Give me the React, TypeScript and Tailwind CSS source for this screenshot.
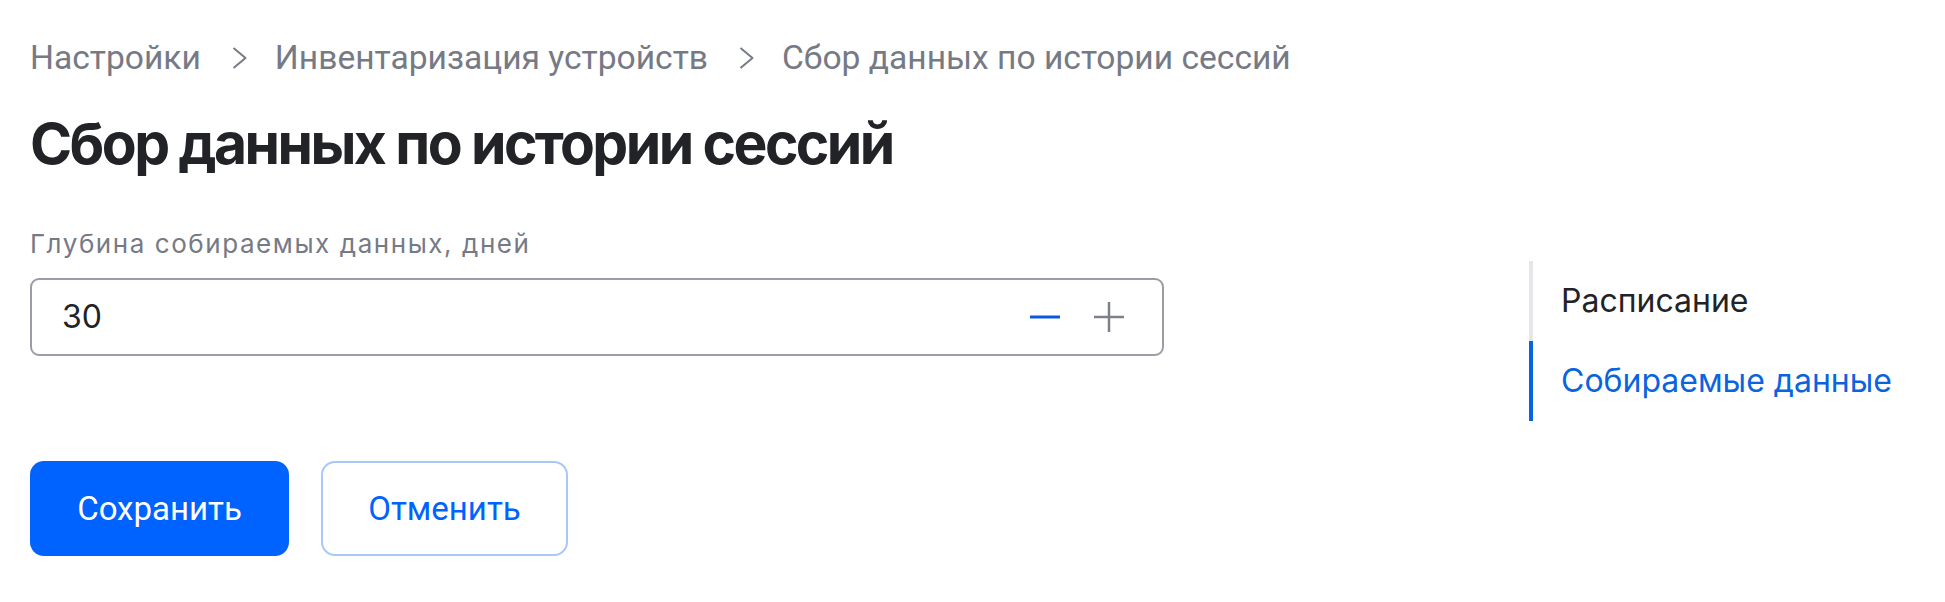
const crumbs = ["Настройки", "Инвентаризация устройств", "Сбор данных по истории сессий"];

function Chevron() {
  return (
    <svg width="15" height="22" viewBox="0 0 15 22" fill="none" className="ml-[31px] mr-[28px] shrink-0">
      <polyline points="1.5,1 13.5,11 1.5,21" stroke="currentColor" strokeWidth="2" strokeLinejoin="round" />
    </svg>
  );
}

export default function App() {
  return (
    <div className="min-h-screen bg-white px-[30px] pt-[38px] font-['Inter',sans-serif]">
      <div className="flex items-start">
        <div className="w-[1134px] shrink-0">
          {/* Breadcrumbs */}
          <nav className="flex items-center whitespace-nowrap font-['Roboto',sans-serif] text-[33.6px] leading-[40px] text-[#767a85]">
            {crumbs.map((c, i) => (
              <span key={c} className="flex items-center">
                {i > 0 && <Chevron />}
                {c}
              </span>
            ))}
          </nav>

          <h1 className="mt-[34px] whitespace-nowrap text-[57px] font-bold leading-[64px] tracking-[-0.045em] text-[#222327]">
            Сбор данных по истории сессий
          </h1>

          <div className="mt-[52px]">
            <label className="block text-[26px] leading-[32px] tracking-[0.06em] text-[#767a85]">
              Глубина собираемых данных, дней
            </label>
            <div className="mt-[18px] flex h-[78px] items-center rounded-[9px] border-2 border-[#9a9da5] pl-[30px] pr-[38px]">
              <span className="flex-1 text-[32px] text-[#222327]">30</span>
              <button className="mr-[34px] text-[#0b56e0]">
                <svg width="30" height="30" viewBox="0 0 30 30">
                  <line x1="0" y1="15" x2="30" y2="15" stroke="currentColor" strokeWidth="3" />
                </svg>
              </button>
              <button className="text-[#7d808a]">
                <svg width="30" height="30" viewBox="0 0 30 30">
                  <line x1="0" y1="15" x2="30" y2="15" stroke="currentColor" strokeWidth="2.5" />
                  <line x1="15" y1="0" x2="15" y2="30" stroke="currentColor" strokeWidth="2.5" />
                </svg>
              </button>
            </div>
          </div>

          <div className="mt-[105px] flex gap-[32px] font-['Roboto',sans-serif]">
            <button className="h-[95px] w-[259px] rounded-[14px] bg-[#0062ff] text-[33px] text-white">
              Сохранить
            </button>
            <button className="h-[95px] w-[247px] rounded-[14px] border-2 border-[#a9c8fa] bg-white text-[33px] text-[#0062ff]">
              Отменить
            </button>
          </div>
        </div>

        {/* Side navigation */}
        <aside className="ml-[365px] mt-[223px] flex flex-col whitespace-nowrap text-[32px]">
          <a className="flex h-[80px] items-center border-l-4 border-[#e6e6ea] pl-[28px] text-[#222327]">
            Расписание
          </a>
          <a className="flex h-[80px] items-center border-l-4 border-[#0a64e0] pl-[28px] text-[#0a64e0]">
            Собираемые данные
          </a>
        </aside>
      </div>
    </div>
  );
}
